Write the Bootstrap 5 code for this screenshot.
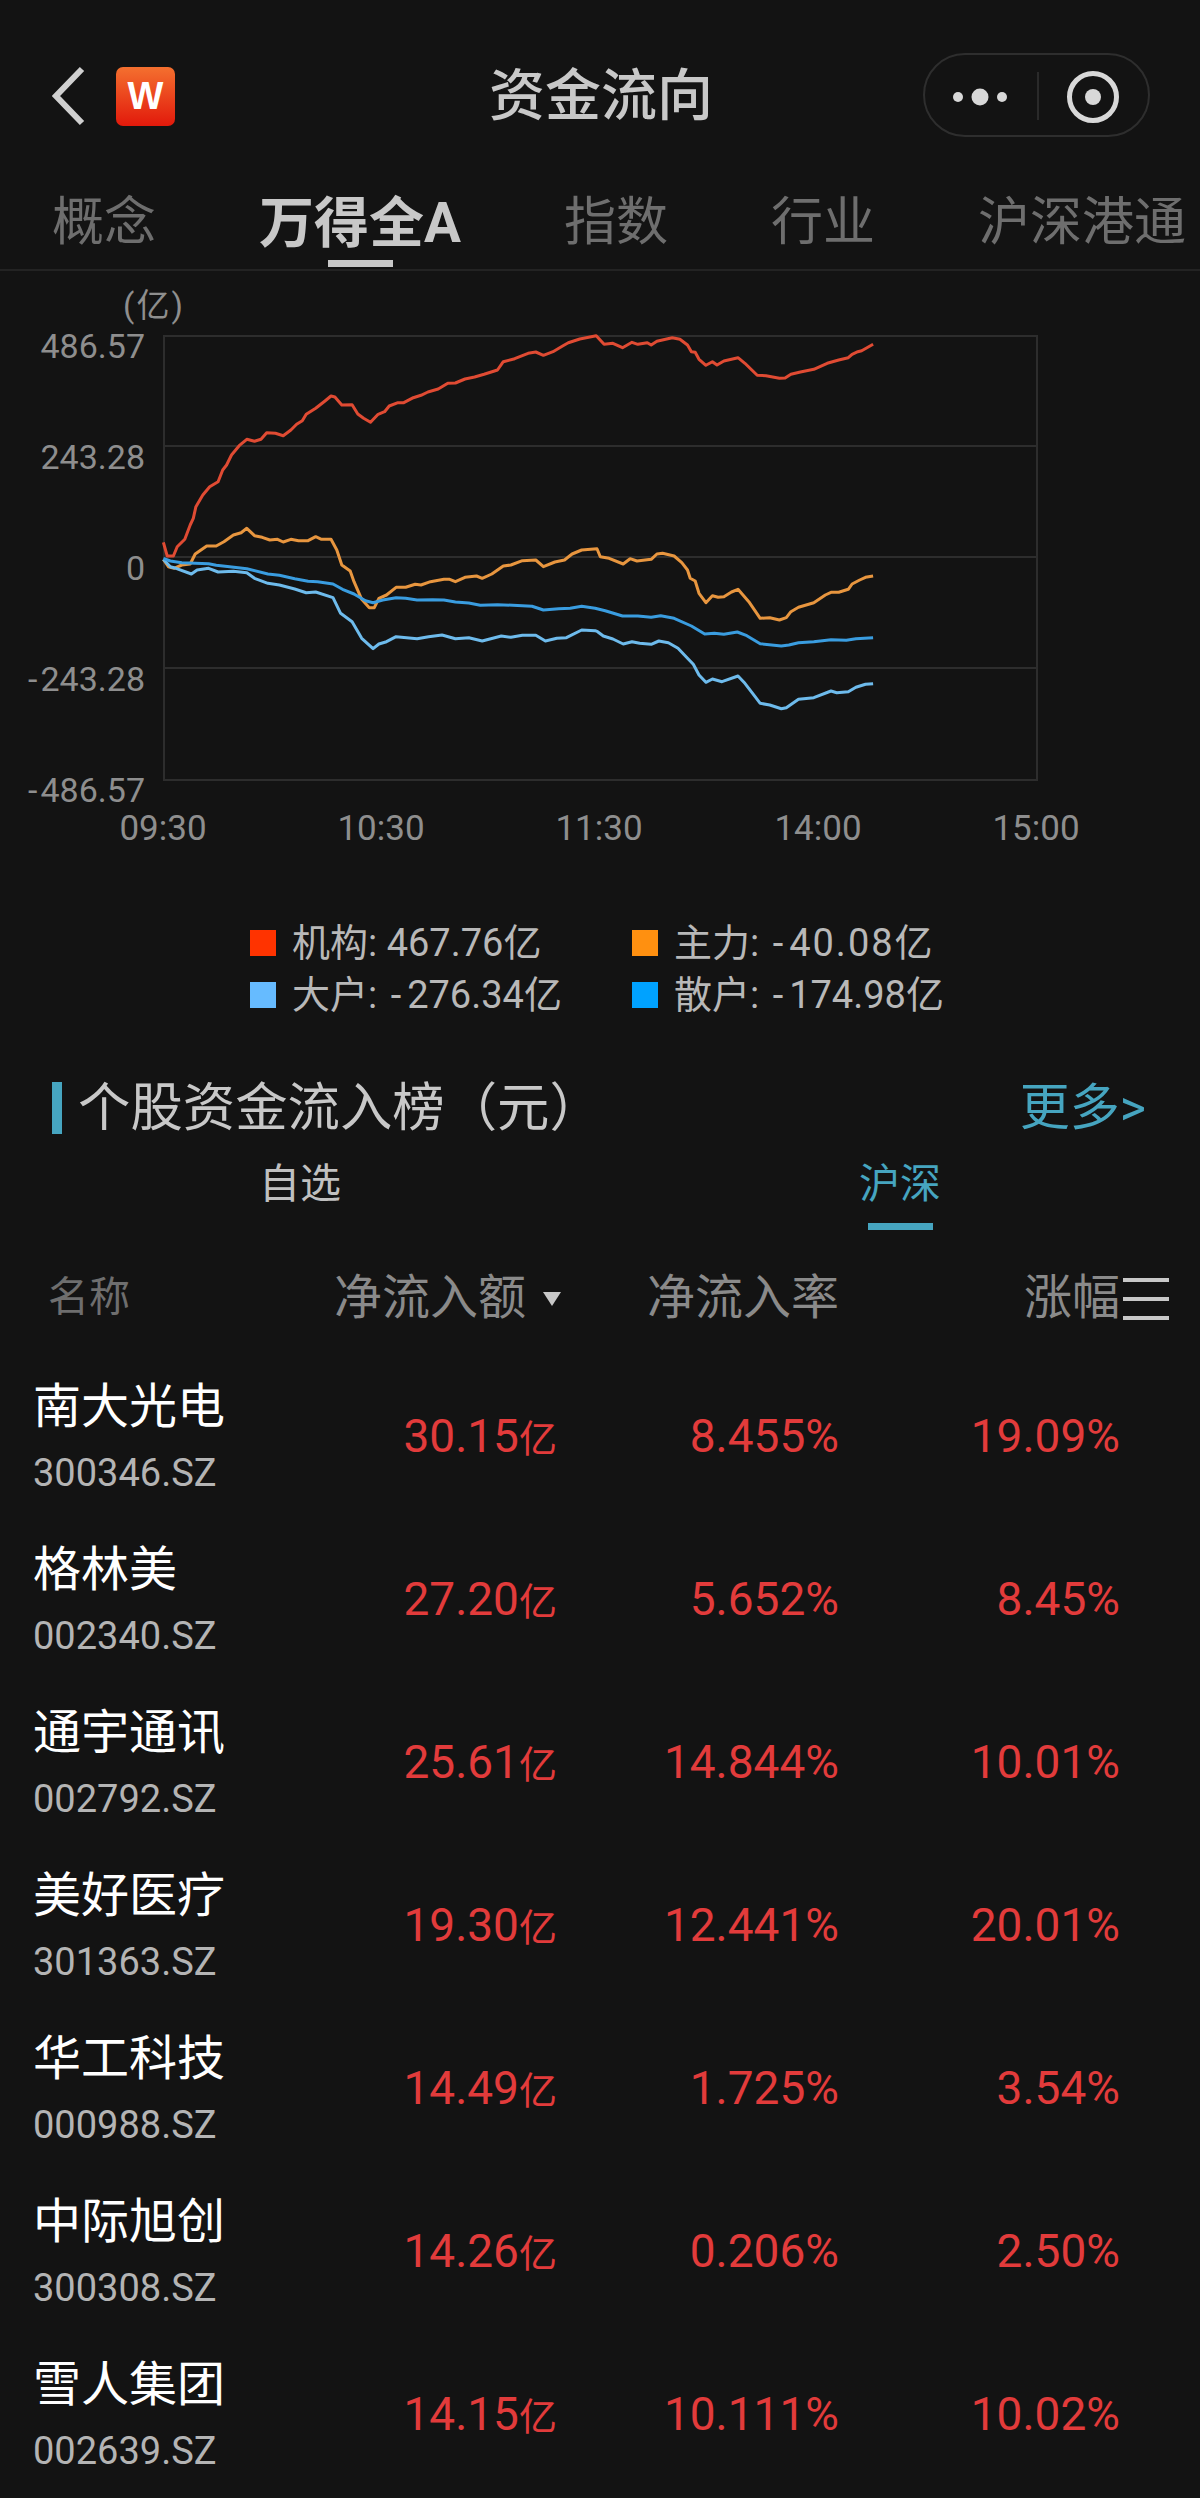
<!DOCTYPE html>
<html lang="zh-CN">
<head>
    <meta charset="UTF-8">
    <meta name="viewport" content="width=device-width, initial-scale=1.0">
    <title>资金流向</title>
    <link href="https://cdn.jsdelivr.net/npm/bootstrap@5.3.3/dist/css/bootstrap.min.css" rel="stylesheet" />
    <style>
        body {
            background-color: #131313;
            color: #c8c8c8;
            font-family: Roboto, "Noto Sans CJK SC", sans-serif;
            margin: 0;
        }

        /* Top bar */
        .top-bar { height: 192px; padding: 0 50px 0 52px; }
        .top-side { flex: 1 0 0; }
        .top-title { font-size: 56px; line-height: 1; font-weight: 500; }
        .app-logo {
            width: 59px;
            height: 59px;
            margin-left: 31px;
            border-radius: 7px;
            background: linear-gradient(#f4702f, #e2190b);
            color: #fff;
            font: bold 38px/59px "Liberation Sans", sans-serif;
            text-align: center;
        }
        .capsule {
            width: 227px;
            height: 84px;
            margin-top: -2px;
            border: 2px solid #2e2e2e;
            border-radius: 42px;
        }

        /* Tabs */
        .tab-strip {
            height: 79px;
            padding-left: 52px;
            padding-top: 4px;
            gap: 103px;
            border-bottom: 2px solid #232323;
            white-space: nowrap;
        }
        .tab-item { font-size: 52px; line-height: 54px; color: #6e6e6e; }
        .tab-item.on { font-size: 55px; font-weight: 700; color: #c8c8c8; }
        .tab-item.on::after {
            content: "";
            display: block;
            width: 65px;
            height: 7px;
            margin: 10px auto 0;
            background: #c8c8c8;
        }

        /* Chart */
        .chart-box { display: block; }
        .chart-box text { font-size: 34px; fill: #8e8e8e; font-family: Roboto, "Noto Sans CJK SC", sans-serif; }
        .chart-box .time-label { font-size: 35px; }
        .grid-line { stroke: #2d2d2d; stroke-width: 2; fill: none; }
        .flow-line { fill: none; stroke-width: 3; stroke-linejoin: round; }

        /* Legend */
        .legend-grid {
            display: grid;
            grid-template-columns: 382px auto;
            grid-auto-rows: 52px;
            margin-top: 21px;
            padding-left: 250px;
        }
        .legend-item { font-size: 38px; color: #b8b8b8; gap: 16px; }
        .legend-swatch { width: 26px; height: 26px; }
        .neg { margin: 0 6px 0 4px; }
        .wide-num { letter-spacing: 2px; }

        /* Section heading */
        .section-head { height: 100px; margin-top: 37px; padding: 0 54px 0 52px; }
        .section-title {
            font-size: 52.4px;
            line-height: 1;
            padding-left: 16px;
            border-left: 10px solid #46a5c0;
        }
        .more-link { font-size: 50px; color: #46a5c0; text-decoration: none; }

        /* Sub tabs */
        .sub-tabs { height: 72px; }
        .sub-tab { font-size: 41px; line-height: 52px; color: #c0c0c0; }
        .sub-tab.on { color: #46a5c0; }
        .sub-tab.on::after {
            content: "";
            display: block;
            width: 65px;
            height: 7px;
            margin: 13px auto 0;
            background: #46a5c0;
        }

        /* Stock table */
        .stock-grid {
            display: grid;
            grid-template-columns: 524px 282px 281px;
            padding-left: 33px;
            align-items: center;
            text-align: right;
        }
        .stock-head { height: 125px; padding-top: 10px; font-size: 48px; color: #8a8a8a; }
        .head-name { font-size: 41px; color: #6e6e6e; text-align: left; padding-left: 15px; }
        .head-sort { position: relative; margin-right: 31px; }
        .sort-mark {
            position: absolute;
            right: -35px;
            top: 50%;
            margin-top: -6px;
            border-left: 9px solid transparent;
            border-right: 9px solid transparent;
            border-top: 14px solid #c8c8c8;
        }
        .head-last { position: relative; }
        .menu-bars {
            position: absolute;
            left: 100%;
            top: 50%;
            width: 46px;
            height: 42px;
            margin: -19px 0 0 3px;
            border-top: 4px solid #c8c8c8;
            border-bottom: 4px solid #c8c8c8;
        }
        .menu-bars::after {
            content: "";
            display: block;
            height: 4px;
            margin-top: 15px;
            background: #c8c8c8;
        }
        .stock-row { height: 163px; font-size: 46px; color: #e23b3b; }
        .stock-name { font-size: 48px; line-height: 56px; color: #fff; }
        .stock-code { font-size: 38px; line-height: 44px; margin-top: 16px; color: #b4b4b4; }
        .unit { font-size: 38px; }
    </style>
</head>
<body>

    <!-- Top bar -->
    <div class="top-bar d-flex align-items-center">
        <div class="top-side d-flex align-items-center">
            <svg width="33" height="60" viewBox="0 0 33 60">
                <path d="M30 3 L4 30 L30 57" fill="none" stroke="#d0d0d0" stroke-width="6" />
            </svg>
            <div class="app-logo">W</div>
        </div>
        <div class="top-title">资金流向</div>
        <div class="top-side d-flex justify-content-end">
            <svg class="capsule" viewBox="0 0 223 80">
                <circle cx="33" cy="42" r="5" fill="#d8d8d8" />
                <circle cx="55" cy="42" r="8.5" fill="#d8d8d8" />
                <circle cx="77" cy="42" r="5" fill="#d8d8d8" />
                <line x1="113" y1="17" x2="113" y2="65" stroke="#2a2a2a" stroke-width="2" />
                <circle cx="168" cy="42" r="23.5" fill="none" stroke="#d8d8d8" stroke-width="5" />
                <circle cx="168" cy="42" r="8" fill="#d8d8d8" />
            </svg>
        </div>
    </div>

    <!-- Tabs -->
    <div class="tab-strip d-flex">
        <div class="tab-item">概念</div>
        <div class="tab-item on">万得全A</div>
        <div class="tab-item">指数</div>
        <div class="tab-item">行业</div>
        <div class="tab-item">沪深港通</div>
    </div>

    <!-- Chart, drawn in page pixels -->
    <svg class="chart-box" width="1200" height="625" viewBox="0 271 1200 625">
        <text x="154" y="317" text-anchor="middle" style="font-size:33px;letter-spacing:2px">(亿)</text>
        <rect class="grid-line" x="164" y="336" width="873" height="444" />
        <line class="grid-line" x1="164" y1="446" x2="1037" y2="446" />
        <line class="grid-line" x1="164" y1="557" x2="1037" y2="557" />
        <line class="grid-line" x1="164" y1="668" x2="1037" y2="668" />

        <text x="145" y="358" text-anchor="end">486.57</text>
        <text x="145" y="469" text-anchor="end">243.28</text>
        <text x="145" y="580" text-anchor="end">0</text>
        <text x="145" y="691" text-anchor="end">-<tspan dx="3">243.28</tspan></text>
        <text x="145" y="802" text-anchor="end">-<tspan dx="3">486.57</tspan></text>

        <text class="time-label" x="163" y="840" text-anchor="middle">09:30</text>
        <text class="time-label" x="381" y="840" text-anchor="middle">10:30</text>
        <text class="time-label" x="599" y="840" text-anchor="middle">11:30</text>
        <text class="time-label" x="818" y="840" text-anchor="middle">14:00</text>
        <text class="time-label" x="1036" y="840" text-anchor="middle">15:00</text>

        <polyline id="lineOrg" class="flow-line" stroke="#e04b33" />
        <polyline id="lineMain" class="flow-line" stroke="#e8963f" />
        <polyline id="lineBig" class="flow-line" stroke="#6ebbec" />
        <polyline id="lineRetail" class="flow-line" stroke="#3a9de0" />
    </svg>

    <!-- Legend -->
    <div class="legend-grid">
        <div class="legend-item d-flex align-items-center"><span class="legend-swatch" style="background:#ff3300"></span><span>机构: 467.76亿</span></div>
        <div class="legend-item d-flex align-items-center"><span class="legend-swatch" style="background:#ff9010"></span><span>主力: <span class="neg">-</span><span class="wide-num">40.08</span>亿</span></div>
        <div class="legend-item d-flex align-items-center"><span class="legend-swatch" style="background:#66bbff"></span><span>大户: <span class="neg">-</span>276.34亿</span></div>
        <div class="legend-item d-flex align-items-center"><span class="legend-swatch" style="background:#00a2ff"></span><span>散户: <span class="neg">-</span>174.98亿</span></div>
    </div>

    <!-- Section heading -->
    <div class="section-head d-flex align-items-center justify-content-between">
        <div class="section-title">个股资金流入榜（元）</div>
        <a class="more-link" href="#">更多&gt;</a>
    </div>

    <div class="sub-tabs row g-0 text-center">
        <div class="col-6 d-flex justify-content-center"><div class="sub-tab">自选</div></div>
        <div class="col-6 d-flex justify-content-center"><div class="sub-tab on">沪深</div></div>
    </div>

    <!-- Stock table -->
    <div class="stock-grid stock-head">
        <div class="d-flex align-items-center justify-content-between">
            <span class="head-name">名称</span>
            <span class="head-sort">净流入额<i class="sort-mark"></i></span>
        </div>
        <div>净流入率</div>
        <div><span class="head-last">涨幅<i class="menu-bars"></i></span></div>
    </div>
    <div id="stockRows"></div>

    <script>
        // traced from the chart, [x, y] in crop units
        const toPage = (pts, base, top) => pts.map(p => `${(base + p[0] / 2.613).toFixed(1)},${(top + p[1] / 3).toFixed(1)}`);

        const series = {
            lineOrg: [
                [0, 280, [[427,787],[437,828],[453,828],[463,800],[483,778],[497,735],[505,715],[512,680],[530,645],[548,620],[570,605],[582,570],[592,555],[605,525],[625,497],[645,478],[665,484],[682,478],[697,458],[720,460],[740,467],[760,450],[775,433],[790,422],[800,403],[825,385],[850,362],[865,348],[875,351],[893,375],[920,374],[935,402],[950,415],[968,427],[988,403],[1005,395],[1017,378],[1040,368],[1055,368],[1080,353],[1100,346],[1118,336],[1145,327],[1170,310],[1190,309],[1215,297],[1240,291],[1265,283],[1300,270],[1315,245],[1345,236],[1380,220],[1400,216],[1420,226],[1445,215],[1470,198],[1485,188],[1515,177],[1558,167]]],
                [500, 280, [[272,193],[295,190],[320,203],[345,187],[360,193],[385,188],[395,195],[410,184],[450,173],[470,178],[490,195],[500,215],[510,217],[520,238],[538,256],[555,245],[567,255],[585,243],[622,233],[640,250],[672,286],[695,287],[730,295],[745,294],[760,283],[785,276],[820,268],[855,250],[885,240],[910,233],[920,223],[935,215],[945,212],[975,193]]]
            ],
            lineMain: [
                [0, 280, [[427,838],[440,860],[455,865],[475,855],[497,852],[510,822],[540,798],[565,798],[585,785],[610,765],[630,758],[645,745],[665,767],[685,772],[705,780],[725,778],[740,786],[760,778],[780,782],[805,782],[825,770],[840,778],[865,778],[880,810],[893,855],[915,873],[925,905],[945,958],[965,983],[978,983],[990,955],[1010,945],[1035,922],[1060,922],[1085,913],[1100,915],[1125,905],[1160,898],[1175,898],[1190,905],[1215,892],[1245,888],[1260,895],[1285,882],[1315,858],[1335,855],[1365,842],[1400,840],[1420,860],[1450,846],[1475,840],[1495,822],[1520,810],[1560,806]]],
                [500, 280, [[262,830],[285,835],[322,852],[340,836],[358,843],[395,838],[410,822],[425,820],[455,828],[475,848],[490,870],[497,895],[510,903],[520,940],[538,968],[555,947],[570,952],[585,950],[605,936],[622,928],[650,965],[680,1015],[705,1013],[730,1020],[748,1013],[760,995],[780,982],[820,968],[850,945],[865,937],[885,937],[910,928],[920,912],[940,900],[955,892],[975,888]]]
            ],
            lineBig: [
                [0, 280, [[427,838],[445,860],[460,865],[500,882],[515,870],[545,865],[570,876],[610,874],[645,878],[665,895],[700,910],[730,915],[770,927],[800,938],[825,936],[870,953],[890,1000],[920,1025],[945,1075],[975,1106],[990,1092],[1010,1085],[1035,1070],[1090,1076],[1120,1070],[1155,1065],[1190,1076],[1225,1073],[1260,1083],[1310,1068],[1335,1072],[1365,1066],[1400,1066],[1425,1083],[1455,1075],[1480,1073],[1520,1050],[1555,1052]]],
                [500, 620, [[255,35],[270,48],[295,57],[322,72],[345,65],[365,70],[395,73],[415,63],[440,68],[465,85],[490,115],[505,133],[520,165],[538,187],[555,177],[580,185],[622,168],[640,190],[660,220],[680,250],[705,255],[735,266],[748,263],[780,238],[820,233],[865,213],[880,218],[910,215],[930,202],[955,193],[975,191]]]
            ],
            lineRetail: [
                [0, 280, [[427,835],[445,843],[475,848],[510,850],[545,851],[565,856],[600,860],[645,866],[700,882],[730,886],[770,896],[805,904],[830,905],[870,912],[895,928],[925,942],[955,962],[975,968],[1000,960],[1035,953],[1060,955],[1090,960],[1130,959],[1160,960],[1190,966],[1225,969],[1255,976],[1300,974],[1340,976],[1390,979],[1420,990],[1460,986],[1490,985],[1520,979],[1555,985]]],
                [500, 280, [[275,992],[320,1008],[360,1008],[395,1012],[420,1007],[455,1015],[500,1038],[535,1062],[560,1060],[585,1063],[620,1056],[645,1067],[680,1091],[735,1098],[755,1095],[780,1088],[820,1085],[865,1079],[905,1081],[930,1076],[975,1073]]]
            ]
        };

        for (const id in series) {
            const pts = series[id].flatMap(s => toPage(s[2], s[0], s[1]));
            document.getElementById(id).setAttribute('points', pts.join(' '));
        }

        const stocks = [
            ['南大光电', '300346.SZ', '30.15', '8.455%', '19.09%'],
            ['格林美', '002340.SZ', '27.20', '5.652%', '8.45%'],
            ['通宇通讯', '002792.SZ', '25.61', '14.844%', '10.01%'],
            ['美好医疗', '301363.SZ', '19.30', '12.441%', '20.01%'],
            ['华工科技', '000988.SZ', '14.49', '1.725%', '3.54%'],
            ['中际旭创', '300308.SZ', '14.26', '0.206%', '2.50%'],
            ['雪人集团', '002639.SZ', '14.15', '10.111%', '10.02%']
        ];

        document.getElementById('stockRows').innerHTML = stocks.map(s => `
            <div class="stock-grid stock-row">
                <div class="d-flex align-items-center justify-content-between">
                    <div class="text-start">
                        <div class="stock-name">${s[0]}</div>
                        <div class="stock-code">${s[1]}</div>
                    </div>
                    <div>${s[2]}<span class="unit">亿</span></div>
                </div>
                <div>${s[3]}</div>
                <div>${s[4]}</div>
            </div>`).join('');
    </script>
    <script src="https://cdn.jsdelivr.net/npm/bootstrap@5.3.3/dist/js/bootstrap.bundle.min.js"></script>
</body>
</html>
